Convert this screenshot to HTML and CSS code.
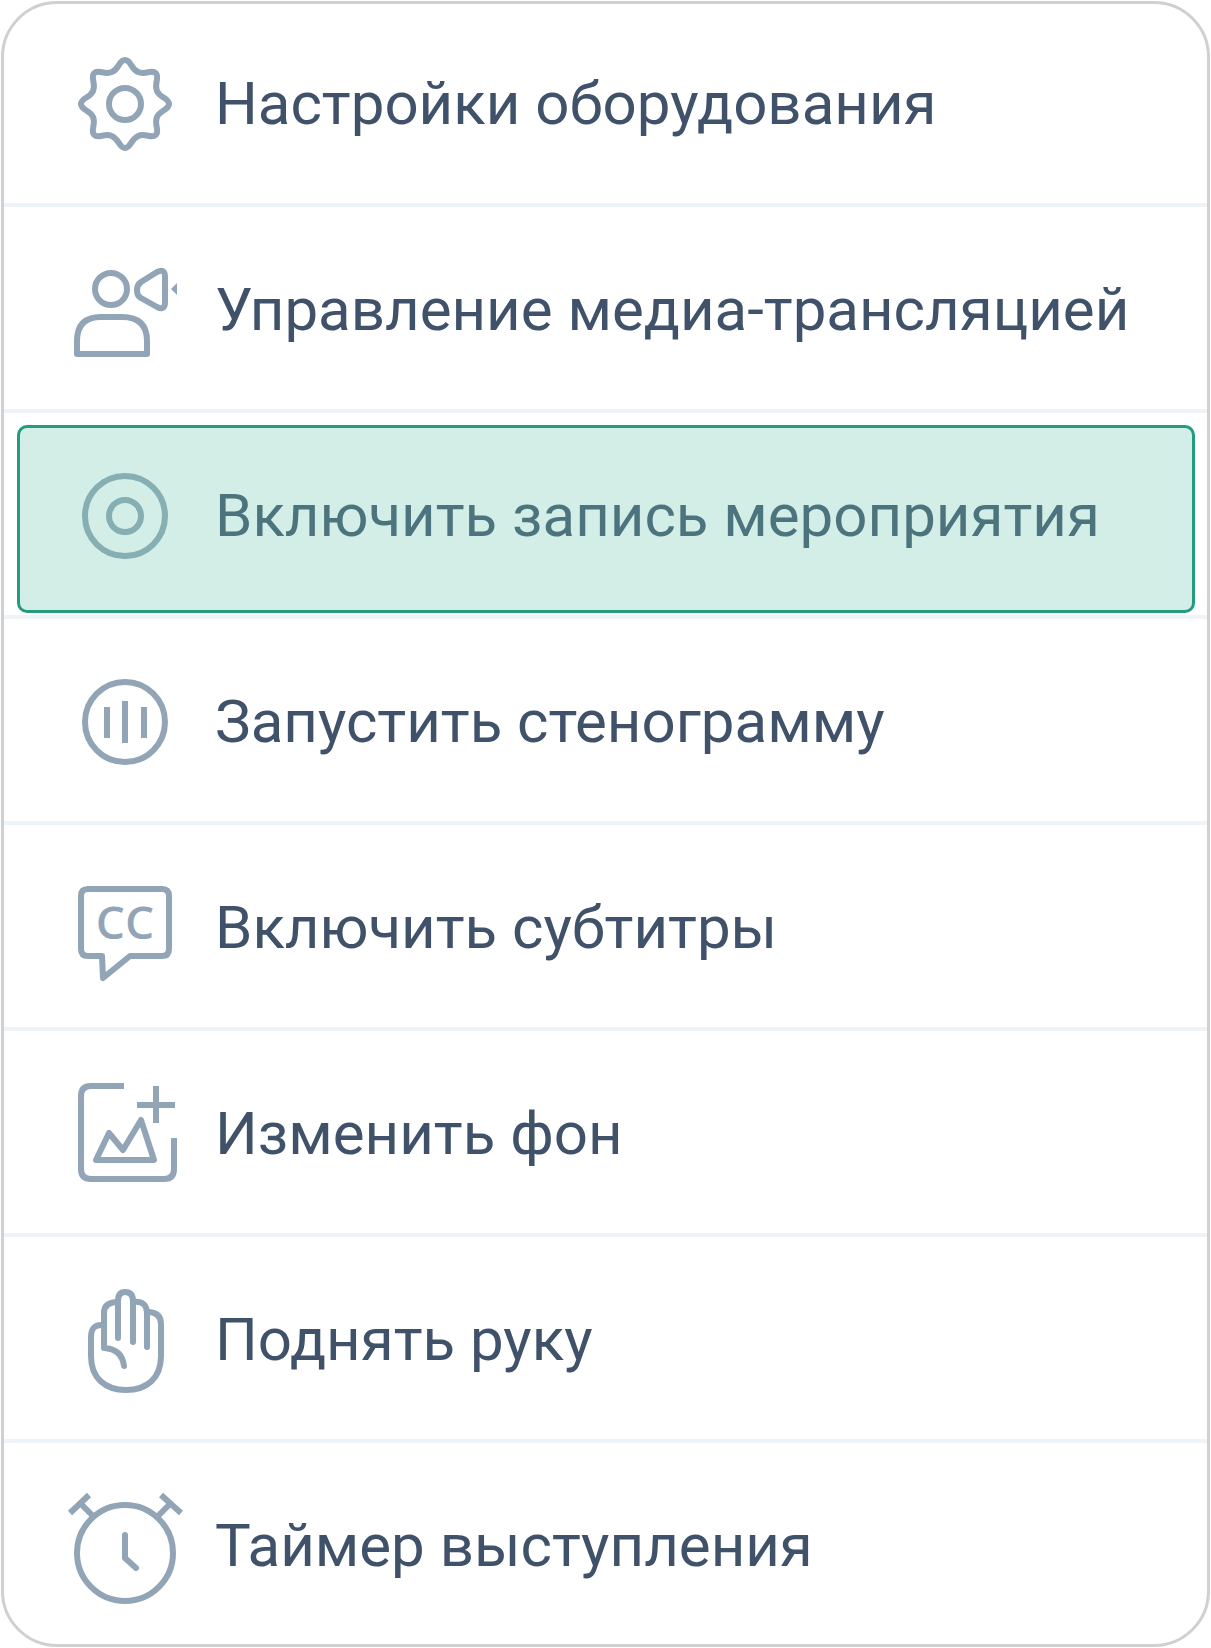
FILE: index.html
```html
<!DOCTYPE html>
<html lang="ru">
<head>
    <meta charset="UTF-8">
    <meta name="viewport" content="width=device-width, initial-scale=1.0">
    <title>Меню мероприятия</title>
    <link rel="stylesheet" href="styles.css">
</head>
<body>
    <ul class="menu">
        <li class="menu-item">
            <button type="button" class="menu-button">
                <svg class="icon" viewBox="0 0 120 120" aria-hidden="true">
                    <path d="M60 16C66 16 65.8 25 73.2 28.1C80.6 31.2 86.6 25 90.8 29.2C95 33.4 88.8 39.4 91.9 46.8C95 54.2 104 54 104 60C104 66 95 65.8 91.9 73.2C88.8 80.6 95 86.6 90.8 90.8C86.6 95 80.6 88.8 73.2 91.9C65.8 95 66 104 60 104C54 104 54.2 95 46.8 91.9C39.4 88.8 33.4 95 29.2 90.8C25 86.6 31.2 80.6 28.1 73.2C25 65.8 16 66 16 60C16 54 25 54.2 28.1 46.8C31.2 39.4 25 33.4 29.2 29.2C33.4 25 39.4 31.2 46.8 28.1C54.2 25 54 16 60 16z"/>
                    <circle cx="60" cy="60" r="16"/>
                </svg>
                <span>Настройки оборудования</span>
            </button>
        </li>
        <li class="menu-item">
            <button type="button" class="menu-button">
                <svg class="icon" viewBox="0 0 120 120" aria-hidden="true">
                    <circle cx="46" cy="39" r="16"/>
                    <path d="M12 104V91Q12 67 36 67H57Q82 67 82 91V104z"/>
                    <path d="M76 32L92 22Q100 18 100 27V52Q100 61 92 57L76 48Q72 46 72 40Q72 35 76 32z"/>
                    <path class="solid" d="M106 39L112 33V45z"/>
                </svg>
                <span>Управление медиа-трансляцией</span>
            </button>
        </li>
        <li class="menu-item active">
            <button type="button" class="menu-button">
                <svg class="icon" viewBox="0 0 120 120" aria-hidden="true">
                    <circle cx="60" cy="60" r="40"/>
                    <circle cx="60" cy="60" r="16"/>
                </svg>
                <span>Включить запись мероприятия</span>
            </button>
        </li>
        <li class="menu-item">
            <button type="button" class="menu-button">
                <svg class="icon" viewBox="0 0 120 120" aria-hidden="true">
                    <circle cx="60" cy="60" r="40"/>
                    <path class="flat" d="M42 45V76M60 39V81M79 45V76"/>
                </svg>
                <span>Запустить стенограмму</span>
            </button>
        </li>
        <li class="menu-item">
            <button type="button" class="menu-button">
                <svg class="icon" viewBox="0 0 120 120" aria-hidden="true">
                    <path d="M37 88H23Q16 88 16 81V28Q16 21 23 21H97Q104 21 104 28V81Q104 88 97 88H65L38 110z"/>
                    <text class="cc" x="60" y="71">CC</text>
                </svg>
                <span>Включить субтитры</span>
            </button>
        </li>
        <li class="menu-item">
            <button type="button" class="menu-button">
                <svg class="icon" viewBox="0 0 120 120" aria-hidden="true">
                    <path class="flat" d="M59 12H26Q16 12 16 22V95Q16 105 26 105H99Q109 105 109 95V64"/>
                    <path class="flat" d="M72 31H110M91 12V49"/>
                    <path d="M31 86L44 59L58 76L76 46L89 86z"/>
                </svg>
                <span>Изменить фон</span>
            </button>
        </li>
        <li class="menu-item">
            <button type="button" class="menu-button">
                <svg class="icon" viewBox="0 0 120 120" aria-hidden="true">
                    <path d="M38 45Q26 44 26 57V76C26 98 40 110 61 110C82 110 96 98 96 76V44Q96 32 82 32"/>
                    <path d="M59 86Q57 69 39 68V33Q39 22 53 22"/>
                    <path d="M53 58V21Q53 12 60 12Q68 12 68 21V62"/>
                    <path d="M68 22Q82 20 82 34V67"/>
                </svg>
                <span>Поднять руку</span>
            </button>
        </li>
        <li class="menu-item">
            <button type="button" class="menu-button">
                <svg class="icon" viewBox="0 0 120 120" aria-hidden="true">
                    <circle cx="60" cy="67" r="48"/>
                    <path d="M60 49V72L71 82"/>
                    <path class="flat" d="M5 27L24 9M15 17L29 31M96 9L116 27M106 17L92 31"/>
                </svg>
                <span>Таймер выступления</span>
            </button>
        </li>
    </ul>
</body>
</html>
```
FILE: styles.css
```css
* {
    box-sizing: border-box;
}

body {
    margin: 0;
    padding: 1px;
    background: #fff;
    font-family: Roboto, "Liberation Sans", sans-serif;
}

.menu {
    margin: 0;
    padding: 0;
    list-style: none;
    border: 3px solid #d0d0d0;
    border-radius: 56px;
    overflow: hidden;
}

.menu-item {
    position: relative;
    height: 206px;
}

.menu-item + .menu-item {
    padding-top: 4px;
    border-top: 4px solid #eef3f8;
}

.menu-item:first-child {
    height: 199px;
}

.menu-item:last-child {
    height: 205px;
}

.menu-button {
    display: flex;
    align-items: center;
    gap: 30px;
    width: 100%;
    height: 100%;
    padding: 0 61px;
    border: 0;
    background: none;
    color: #40516a;
    font: inherit;
    font-size: 60px;
    line-height: 72px;
    text-align: left;
    white-space: nowrap;
    cursor: pointer;
}

/* highlight lies over the row */
.active::after {
    content: "";
    position: absolute;
    inset: 12px 12px 2px 13px;
    border: 3px solid #229b80;
    border-radius: 10px;
    background: rgba(105, 198, 172, 0.3);
    pointer-events: none;
}

.icon {
    flex: none;
    width: 120px;
    height: 120px;
    fill: none;
    stroke: #91a5b7;
    stroke-width: 6;
    stroke-linecap: round;
    stroke-linejoin: round;
}

.icon .flat {
    stroke-linecap: butt;
}

.icon .solid {
    fill: #91a5b7;
    stroke: none;
}

.icon .cc {
    fill: #91a5b7;
    stroke: none;
    font-family: "Open Sans", sans-serif;
    font-size: 46px;
    font-weight: 600;
    text-anchor: middle;
}
```
